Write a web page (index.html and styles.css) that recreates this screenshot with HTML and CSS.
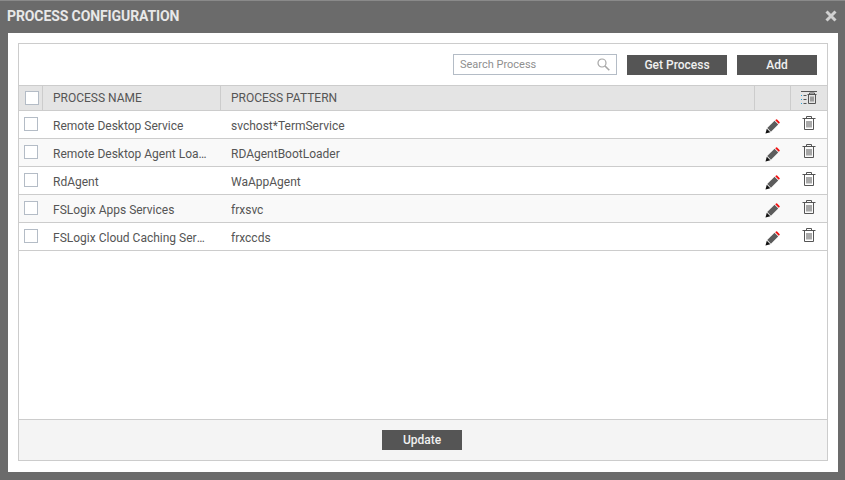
FILE: index.html
```html
<!DOCTYPE html>
<html lang="en">
<head>
<meta charset="utf-8">
<title>Process Configuration</title>
<link rel="stylesheet" href="styles.css">
</head>
<body>
<svg class="sprites" width="0" height="0" aria-hidden="true">
  <symbol id="pencil" viewBox="0 0 16 16">
    <path d="M.5 15.500l1.400-5.200 3.800 3.800z" fill="#111"/>
    <path d="M2.400 9.700l7.800-7.800 3.900 3.900-7.800 7.800z" fill="#5c5c5c"/>
    <path d="M10.900 1.400l.9-.9a.8.8 0 0 1 1.100 0l2.600 2.600a.8.8 0 0 1 0 1.100l-.9.9z" fill="#f01010"/>
  </symbol>
  <symbol id="trash" viewBox="0 0 14 14">
    <path d="M.5 2.500h13M4.500 2.500V.5h5v2M2.500 2.500v11h9v-11M5 5v6.500M7 5v6.500M9 5v6.500" fill="none" stroke="#555" stroke-width="1"/>
  </symbol>
</svg>
<div class="modal">
  <header class="title-bar">
    <h1 class="title">PROCESS CONFIGURATION</h1>
    <svg class="close" width="12" height="12" viewBox="0 0 12 12" aria-label="Close"><path d="M1.500 1.500l9 9M10.500 1.500l-9 9" stroke="#d0d0d0" stroke-width="3"/></svg>
  </header>
  <div class="body">
    <div class="panel">
      <div class="toolbar">
        <div class="search">
          <span class="placeholder">Search Process</span>
          <svg class="search-icon" width="13" height="13" viewBox="0 0 13 13"><circle cx="5" cy="5" r="4" fill="none" stroke="#a6a6a6" stroke-width="1.2"/><path d="M8 8l4.300 4.300" stroke="#a6a6a6" stroke-width="1.600"/></svg>
        </div>
        <button class="btn">Get Process</button>
        <button class="btn btn-add">Add</button>
      </div>
      <div class="row head">
        <div class="cell c-check"><span class="box box-head"></span></div>
        <div class="cell c-name">PROCESS NAME</div>
        <div class="cell c-pattern">PROCESS PATTERN</div>
        <div class="cell c-edit"></div>
        <div class="cell c-del">
          <svg width="16" height="14" viewBox="0 0 16 14"><path d="M0 .5h16" stroke="#555"/><path d="M0 4.500h1M0 8.500h1M0 12.500h1" stroke="#2a9fd6"/><path d="M2.500 4.500h3M2.500 8.500h3M2.500 12.500h3" stroke="#555"/><path d="M6.500 3.500h9M8.500 3.500V2h5v1.500M7.500 3.500v9h7v-9M10 5.500v5M12 5.500v5" fill="none" stroke="#555"/></svg>
        </div>
      </div>
      <div class="row">
        <div class="cell c-check"><span class="box"></span></div>
        <div class="cell c-name">Remote Desktop Service</div>
        <div class="cell c-pattern">svchost*TermService</div>
        <div class="cell c-edit"><svg class="pencil"><use href="#pencil"/></svg></div>
        <div class="cell c-del"><svg class="trash"><use href="#trash"/></svg></div>
      </div>
      <div class="row alt">
        <div class="cell c-check"><span class="box"></span></div>
        <div class="cell c-name">Remote Desktop Agent Loader</div>
        <div class="cell c-pattern">RDAgentBootLoader</div>
        <div class="cell c-edit"><svg class="pencil"><use href="#pencil"/></svg></div>
        <div class="cell c-del"><svg class="trash"><use href="#trash"/></svg></div>
      </div>
      <div class="row">
        <div class="cell c-check"><span class="box"></span></div>
        <div class="cell c-name">RdAgent</div>
        <div class="cell c-pattern">WaAppAgent</div>
        <div class="cell c-edit"><svg class="pencil"><use href="#pencil"/></svg></div>
        <div class="cell c-del"><svg class="trash"><use href="#trash"/></svg></div>
      </div>
      <div class="row alt">
        <div class="cell c-check"><span class="box"></span></div>
        <div class="cell c-name">FSLogix Apps Services</div>
        <div class="cell c-pattern">frxsvc</div>
        <div class="cell c-edit"><svg class="pencil"><use href="#pencil"/></svg></div>
        <div class="cell c-del"><svg class="trash"><use href="#trash"/></svg></div>
      </div>
      <div class="row">
        <div class="cell c-check"><span class="box"></span></div>
        <div class="cell c-name">FSLogix Cloud Caching Service</div>
        <div class="cell c-pattern">frxccds</div>
        <div class="cell c-edit"><svg class="pencil"><use href="#pencil"/></svg></div>
        <div class="cell c-del"><svg class="trash"><use href="#trash"/></svg></div>
      </div>
      <div class="spacer"></div>
      <footer class="footer"><button class="btn">Update</button></footer>
    </div>
  </div>
</div>
</body>
</html>
```
FILE: styles.css
```css
* { box-sizing: border-box; }
html, body { margin: 0; height: 100%; }
body {
  width: 845px;
  height: 480px;
  overflow: hidden;
  font-family: Roboto, "Liberation Sans", sans-serif;
  background: #6b6b6b;
}
.sprites { position: absolute; }
.modal {
  height: 480px;
  border-top: 1px solid #8a8a8a;
  display: flex;
  flex-direction: column;
  padding: 0 7px 8px 8px;
}
.title-bar {
  height: 32px;
  flex: none;
  display: flex;
  align-items: center;
  justify-content: space-between;
  margin-left: -1px;
  margin-right: 1px;
  padding-bottom: 2px;
}
.title {
  margin: 0;
  font-size: 14px;
  font-weight: 700;
  letter-spacing: -0.1px;
  color: #e8e8e8;
}
.close { margin-right: 0; }
.body {
  flex: 1;
  background: #fff;
  padding: 10px 10px 11px;
  display: flex;
}
.panel {
  flex: 1;
  border: 1px solid #ccc;
  display: flex;
  flex-direction: column;
}
.toolbar {
  height: 41px;
  flex: none;
  display: flex;
  align-items: flex-start;
  justify-content: flex-end;
  gap: 10px;
  padding: 11px 10px 0 0;
}
.search {
  width: 164px;
  height: 21px;
  margin-top: -1px;
  border: 1px solid #b4bcc6;
  display: flex;
  align-items: center;
  justify-content: space-between;
  padding: 0 6px;
}
.placeholder { font-size: 11px; color: #8f8f8f; }
.btn {
  width: 100px;
  height: 20px;
  border: 0;
  padding: 0;
  background: #555;
  color: #f0f0f0;
  font-family: inherit;
  font-size: 12px;
  font-weight: 500;
}
.btn-add { width: 80px; }
.row {
  height: 28px;
  flex: none;
  display: flex;
  border-bottom: 1px solid #ccc;
  font-size: 12px;
  color: #555;
}
.row.alt { background: #f9f9f9; }
.row.head {
  height: 26px;
  background: #e4e4e4;
  border-top: 1px solid #ccc;
}
.cell {
  display: flex;
  align-items: center;
  min-width: 0;
  white-space: nowrap;
}
.c-check { width: 24px; padding-left: 5px; padding-bottom: 1px; }
.head .c-check { padding-bottom: 0; padding-left: 6px; border-right: 1px solid #ccc; }
.box {
  width: 14px;
  height: 14px;
  background: #fff;
  border: 1px solid #b4bcc6;
}
.c-name {
  width: 178px;
  padding: 0 13px 0 10px;
  display: block;
  line-height: 31px;
  overflow: hidden;
  text-overflow: ellipsis;
}
.head .c-name { border-right: 1px solid #ccc; line-height: 24px; }
.c-pattern { flex: 1; padding-left: 10px; padding-top: 3px; }
.head .c-pattern { padding-top: 0; border-right: 1px solid #ccc; }
.c-edit { width: 36px; justify-content: center; padding: 4px 2px 0 0; }
.head .c-edit { border-right: 1px solid #ccc; }
.c-del { width: 36px; justify-content: center; padding-bottom: 3px; }
.head .c-del { padding-bottom: 0; }
.pencil { width: 15px; height: 15px; }
.trash { width: 14px; height: 14px; }
.spacer { flex: 1; }
.footer {
  height: 41px;
  flex: none;
  background: #f4f4f4;
  border-top: 1px solid #ccc;
  display: flex;
  justify-content: center;
  padding: 10px 2px 0 0;
}
.footer .btn { width: 80px; }
```
